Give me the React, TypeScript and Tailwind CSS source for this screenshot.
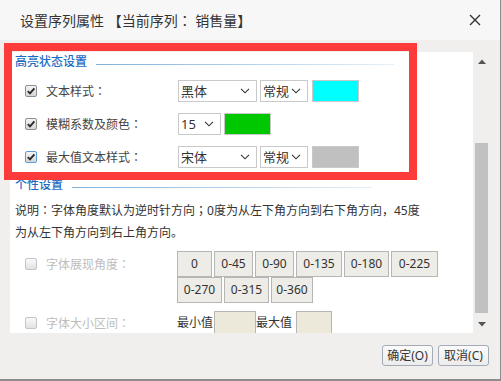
import React from 'react'

const font = { fontFamily: '"Noto Sans", "Noto Sans CJK SC", sans-serif' }
// centred full-width punctuation, as the Windows UI font draws it
const jp = { fontFamily: '"Noto Sans CJK JP", sans-serif' }

const P = ({ c }: { c: string }) => <span style={jp}>{c}</span>

const Check = ({ checked, disabled, focus }: { checked?: boolean; disabled?: boolean; focus?: boolean }) => (
  <div
    className={`w-[12px] h-[12px] rounded-[2px] border flex items-center justify-center shrink-0 ${
      disabled
        ? 'border-[#c4c4c4] bg-gradient-to-b from-[#fafafa] to-[#e2e2e2]'
        : focus
        ? 'border-[#5d9ad8] bg-gradient-to-b from-[#f4f4f4] to-[#d6d6d6]'
        : 'border-[#8e8e8e] bg-gradient-to-b from-[#f4f4f4] to-[#d6d6d6]'
    }`}
  >
    {checked && (
      <svg width="10" height="10" viewBox="0 0 10 10">
        <path d="M1.8 5.2 L4 7.4 L8.4 2.4" fill="none" stroke="#2a2a2a" strokeWidth="1.9" />
      </svg>
    )}
  </div>
)

const Chevron = () => (
  <svg width="10" height="6" viewBox="0 0 10 6" className="shrink-0">
    <path d="M1 0.8 L5 4.8 L9 0.8" fill="none" stroke="#333" strokeWidth="1.1" />
  </svg>
)

const Select = ({ value, className }: { value: string; className: string }) => (
  <div className={`h-[22px] border border-[#c9c9c9] bg-white flex items-center justify-between pl-[2px] pr-[6px] text-[13px] text-[#333] ${className}`}>
    <span className="leading-[20px]">{value}</span>
    <Chevron />
  </div>
)

const Heading = ({ text, line }: { text: string; line: string }) => (
  <div className="flex items-center h-[18px] pl-[5px]">
    <span className="text-[12px] leading-[18px] font-medium text-[#1d6cc3]">{text}</span>
    <div className={`ml-[9px] mt-[4px] h-px bg-gradient-to-r from-[#7fb1db] to-[#e6f0f8] ${line}`} />
  </div>
)

const Label = ({ text, muted }: { text: string; muted?: boolean }) => (
  <span className={`ml-[9px] ${muted ? 'text-[#bdbdbd]' : ''}`}>
    {text}
    <P c="：" />
  </span>
)

const angles1 = [
  { label: '0', w: 'w-[35px]' },
  { label: '0-45', w: 'w-[39px]' },
  { label: '0-90', w: 'w-[39px]' },
  { label: '0-135', w: 'w-[46px]' },
  { label: '0-180', w: 'w-[45px]' },
  { label: '0-225', w: 'w-[47px]' },
]
const angles2 = [
  { label: '0-270', w: 'w-[45px]' },
  { label: '0-315', w: 'w-[45px]' },
  { label: '0-360', w: 'w-[42px]' },
]

const AngleBtn = ({ label, w }: { label: string; w: string }) => (
  <div className={`h-[26px] ${w} border border-[#b6b6b6] bg-[#edece6] flex items-center justify-center text-[12px] text-[#333]`}>
    {label}
  </div>
)

export default function App() {
  return (
    <div style={font} className="relative w-[501px] h-[381px] bg-[#f0efee] border-r border-b-2 border-[#8d8d8d] flex flex-col overflow-hidden">
      {/* title */}
      <div className="h-[40px] bg-[#f7f7f7] flex items-center justify-between pl-[20px] pr-[19px] shrink-0">
        <span className="text-[14px] text-[#333] leading-[20px]">
          设置序列属性 【当前序列<P c="：" /> 销售量】
        </span>
        <svg width="12" height="12" viewBox="0 0 12 12">
          <path d="M1 1 L11 11 M11 1 L1 11" stroke="#333" strokeWidth="1.4" />
        </svg>
      </div>

      {/* body */}
      <div className="flex pl-[10px] pt-[12px] shrink-0">
        <div className="w-[463px] h-[281px] bg-white overflow-hidden flex flex-col text-[12px] text-[#444]">
          <div className="mt-[1px]">
            <Heading text="高亮状态设置" line="w-[298px]" />
          </div>

          <div className="mt-[9px] flex items-center h-[22px]">
            <div className="w-[168px] flex items-center pl-[15px]">
              <Check checked />
              <Label text="文本样式" />
            </div>
            <Select value="黑体" className="w-[79px]" />
            <Select value="常规" className="w-[48px] ml-[3px]" />
            <div className="ml-[4px] w-[47px] h-[22px] border border-[#c9c9c9] bg-[#00ffff]" />
          </div>

          <div className="mt-[11px] flex items-center h-[22px]">
            <div className="w-[168px] flex items-center pl-[15px]">
              <Check checked />
              <Label text="模糊系数及颜色" />
            </div>
            <Select value="15" className="w-[43px]" />
            <div className="ml-[3px] w-[47px] h-[22px] border border-[#c9c9c9] bg-[#00c800]" />
          </div>

          <div className="mt-[11px] flex items-center h-[22px]">
            <div className="w-[168px] flex items-center pl-[15px]">
              <Check checked focus />
              <Label text="最大值文本样式" />
            </div>
            <Select value="宋体" className="w-[79px]" />
            <Select value="常规" className="w-[48px] ml-[3px]" />
            <div className="ml-[4px] w-[47px] h-[22px] border border-[#c9c9c9] bg-[#c0c0c0]" />
          </div>

          <div className="mt-[8px]">
            <Heading text="个性设置" line="w-[300px]" />
          </div>

          <div className="mt-[5px] pl-[5px] leading-[22px] text-[#333]">
            <div>
              说明<P c="：" />字体角度默认为逆时针方向<P c="；" />0度为从左下角方向到右下角方向<P c="，" />45度
            </div>
            <div>为从左下角方向到右上角方向。</div>
          </div>

          <div className="mt-[7px] flex items-start">
            <div className="w-[167px] h-[26px] flex items-center pl-[15px]">
              <Check disabled />
              <Label text="字体展现角度" muted />
            </div>
            <div className="flex flex-col">
              <div className="flex gap-x-[2px]">
                {angles1.map((a) => (
                  <AngleBtn key={a.label} label={a.label} w={a.w} />
                ))}
              </div>
              <div className="flex gap-x-[2px]">
                {angles2.map((a) => (
                  <AngleBtn key={a.label} label={a.label} w={a.w} />
                ))}
              </div>
            </div>
          </div>

          <div className="mt-[8px] flex items-center h-[24px] shrink-0">
            <div className="w-[167px] flex items-center pl-[15px]">
              <Check disabled />
              <Label text="字体大小区间" muted />
            </div>
            <span className="text-[#333]">最小值</span>
            <div className="ml-px w-[42px] h-[24px] border border-[#b5b5b5] bg-[#ece9da]" />
            <span className="text-[#333]">最大值</span>
            <div className="ml-[4px] w-[36px] h-[24px] border border-[#b5b5b5] bg-[#ece9da]" />
          </div>
        </div>

        {/* scrollbar */}
        <div className="w-[17px] h-[281px] flex flex-col items-center">
          <svg width="8" height="5" viewBox="0 0 8 5" className="mt-[7px]">
            <path d="M0 5 L4 0.5 L8 5 Z" fill="#555" />
          </svg>
          <div className="mt-[79px] w-[13px] h-[170px] bg-[#c1c1c1]" />
          <svg width="8" height="5" viewBox="0 0 8 5" className="mt-[9px]">
            <path d="M0 0 L8 0 L4 4.5 Z" fill="#555" />
          </svg>
        </div>
      </div>

      {/* footer */}
      <div className="flex justify-end gap-[5px] pt-[12px] pr-[11px]">
        <div className="w-[51px] h-[21px] rounded-[3px] border border-[#a3abb6] bg-gradient-to-b from-[#fbfbfb] to-[#ececec] flex items-center justify-center text-[12px] text-[#333]">
          确定(O)
        </div>
        <div className="w-[51px] h-[21px] rounded-[3px] border border-[#a3abb6] bg-gradient-to-b from-[#fbfbfb] to-[#ececec] flex items-center justify-center text-[12px] text-[#333]">
          取消(C)
        </div>
      </div>

      {/* annotation overlay */}
      <div className="absolute left-[4px] top-[43px] w-[413px] h-[137px] border-[8px] border-[#fd3b3b] pointer-events-none" />
    </div>
  )
}
